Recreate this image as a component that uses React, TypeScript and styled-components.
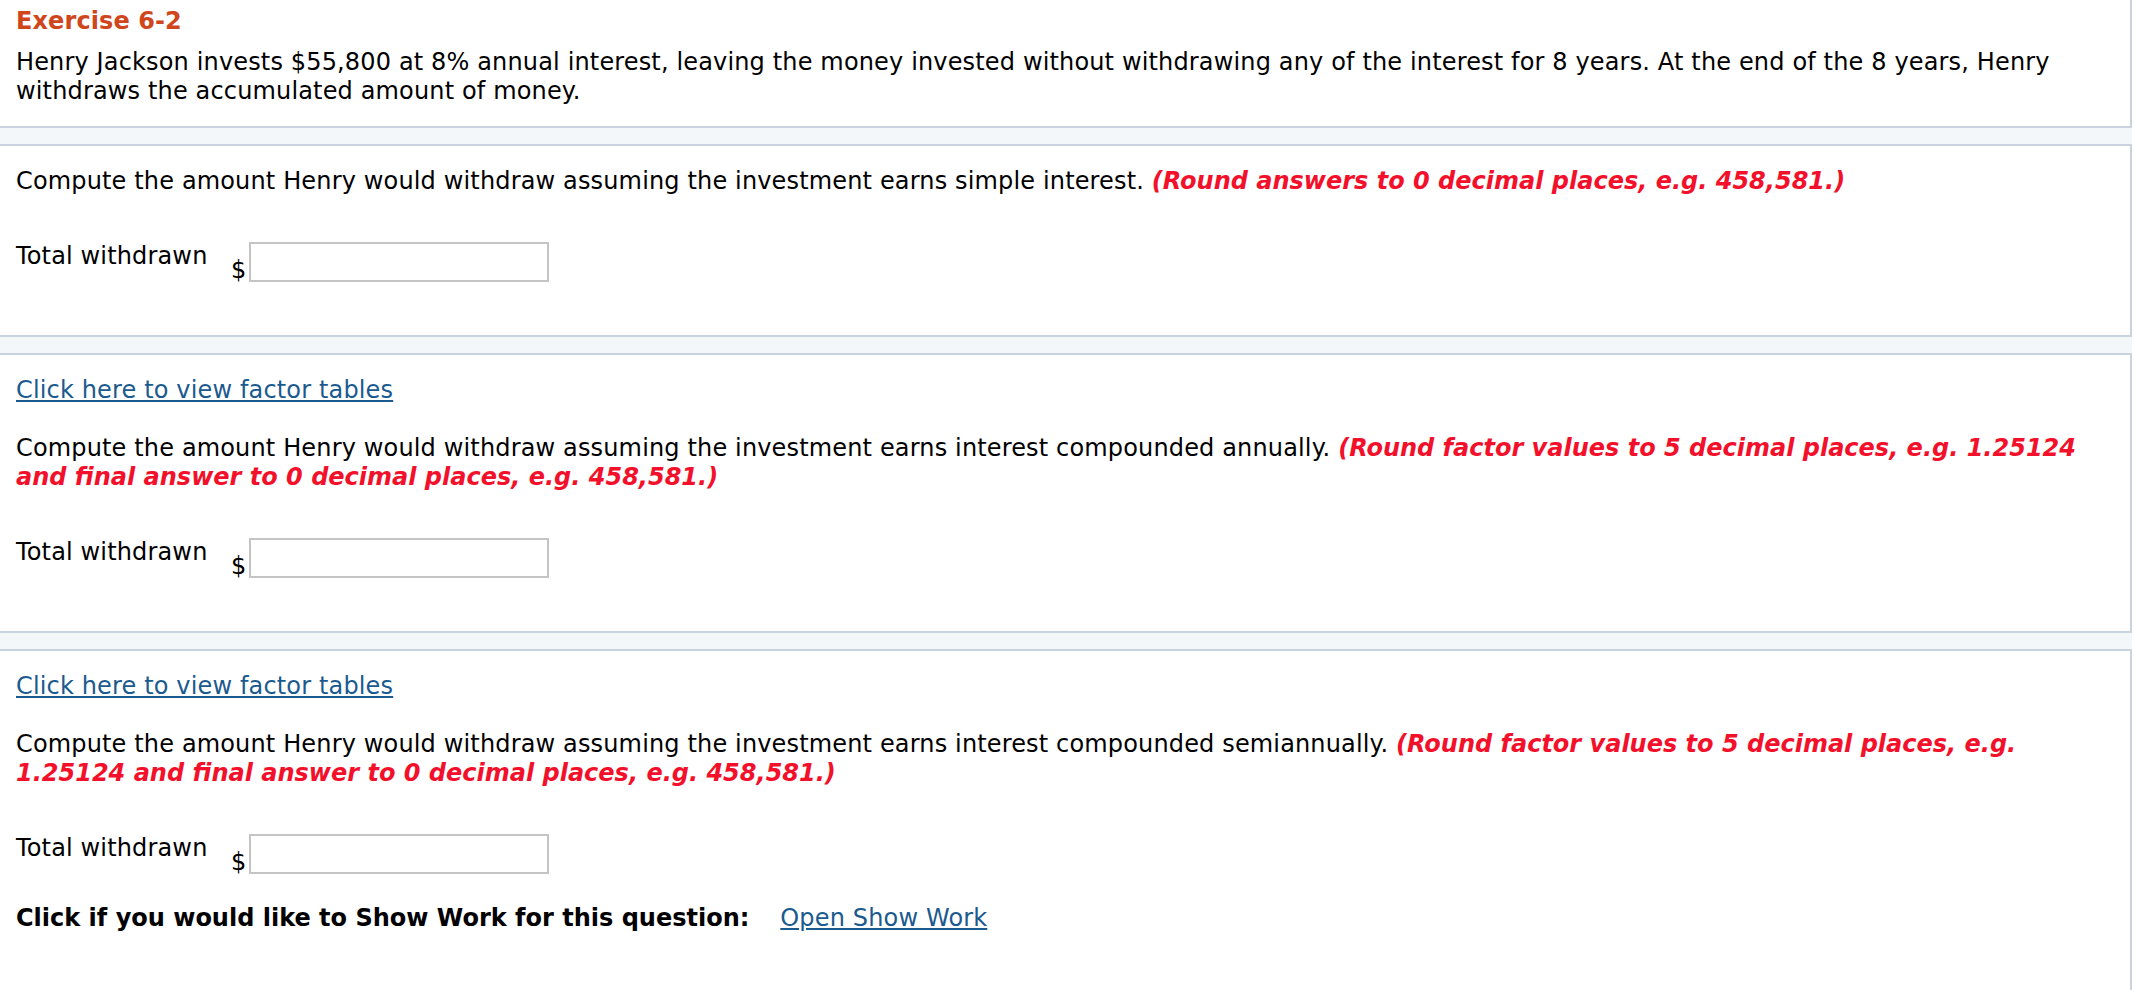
import React from 'react';
import styled, { createGlobalStyle } from 'styled-components';

const GlobalStyle = createGlobalStyle`
  html, body {
    margin: 0;
    padding: 0;
    background: #ffffff;
  }
  body {
    font-family: 'DejaVu Sans', Verdana, sans-serif;
    font-size: 24px;
    letter-spacing: 0.15px;
    color: #000000;
  }
`;

type Question = {
  id: number;
  showTables: boolean;
  lead: string;
  hint: string;
  showWork?: boolean;
};

const questions: Question[] = [
  {
    id: 1,
    showTables: false,
    lead: 'Compute the amount Henry would withdraw assuming the investment earns simple interest.',
    hint: '(Round answers to 0 decimal places, e.g. 458,581.)',
  },
  {
    id: 2,
    showTables: true,
    lead: 'Compute the amount Henry would withdraw assuming the investment earns interest compounded annually.',
    hint: '(Round factor values to 5 decimal places, e.g. 1.25124 and final answer to 0 decimal places, e.g. 458,581.)',
  },
  {
    id: 3,
    showTables: true,
    lead: 'Compute the amount Henry would withdraw assuming the investment earns interest compounded semiannually.',
    hint: '(Round factor values to 5 decimal places, e.g. 1.25124 and final answer to 0 decimal places, e.g. 458,581.)',
    showWork: true,
  },
];

function AnswerField() {
  return (
    <AnswerRow>
      <FieldLabel>Total withdrawn</FieldLabel>
      <Field>
        <Currency>$</Currency>
        <AmountInput type="text" />
      </Field>
    </AnswerRow>
  );
}

function App() {
  return (
    <>
      <GlobalStyle />
      <Page>
        <Panel $first>
          <Title>Exercise 6-2</Title>
          <Problem>
            Henry Jackson invests $55,800 at 8% annual interest, leaving the money invested without withdrawing any
            of the interest for 8 years. At the end of the 8 years, Henry withdraws the accumulated amount of money.
          </Problem>
        </Panel>
        {questions.map((q, i) => (
          <Panel key={q.id} $last={i === questions.length - 1}>
            {q.showTables && <TablesLink href="#">Click here to view factor tables</TablesLink>}
            <Prompt>
              {q.lead} <Hint>{q.hint}</Hint>
            </Prompt>
            <AnswerField />
            {q.showWork && (
              <ShowWorkRow>
                <ShowWorkText>Click if you would like to Show Work for this question:</ShowWorkText>
                <ShowWorkLink href="#">Open Show Work</ShowWorkLink>
              </ShowWorkRow>
            )}
          </Panel>
        ))}
      </Page>
    </>
  );
}

export default App;

const Page = styled.main`
  display: flex;
  flex-direction: column;
  gap: 16px;
  width: 2132px;
  min-height: 100vh;
  background: #f3f7fa;
`;

const Panel = styled.section<{ $first?: boolean; $last?: boolean }>`
  flex: ${(p) => (p.$last ? 1 : 'none')};
  padding: ${(p) => (p.$first ? '7px 16px 20px' : '21px 16px 53px')};
  background: #ffffff;
  border: 2px solid #c9d3df;
  border-left: none;
  border-top-width: ${(p) => (p.$first ? 0 : '2px')};
  border-bottom-width: ${(p) => (p.$last ? 0 : '2px')};
  line-height: 29px;
`;

const Title = styled.h1`
  margin: 0;
  font-size: 24px;
  font-weight: bold;
  line-height: 29px;
  letter-spacing: 0.1px;
  color: #d0461c;
`;

const Problem = styled.p`
  margin: 12px 0 0;
`;

const TablesLink = styled.a`
  display: block;
  width: max-content;
  margin-bottom: 29px;
  color: #1b5a8e;
  text-decoration: underline;
`;

const Prompt = styled.p`
  margin: 0;
`;

const Hint = styled.span`
  font-weight: bold;
  font-style: italic;
  letter-spacing: 0;
  color: #f2102a;
`;

const AnswerRow = styled.div`
  display: flex;
  align-items: flex-start;
  margin-top: 46px;
`;

const FieldLabel = styled.span`
  width: 215px;
  flex: none;
`;

const Field = styled.span`
  display: flex;
  align-items: flex-end;
  gap: 3px;
`;

const Currency = styled.span`
  line-height: 1;
`;

const AmountInput = styled.input`
  box-sizing: border-box;
  width: 300px;
  height: 40px;
  margin: 0;
  padding: 0 6px;
  border: 2px solid #c4c4c4;
  border-radius: 0;
  background: #ffffff;
  font: inherit;
  outline: none;
`;

const ShowWorkRow = styled.div`
  display: flex;
  align-items: baseline;
  gap: 31px;
  margin-top: 30px;
`;

const ShowWorkText = styled.strong`
  font-weight: bold;
  letter-spacing: 0;
`;

const ShowWorkLink = styled.a`
  color: #1b5a8e;
  text-decoration: underline;
`;
